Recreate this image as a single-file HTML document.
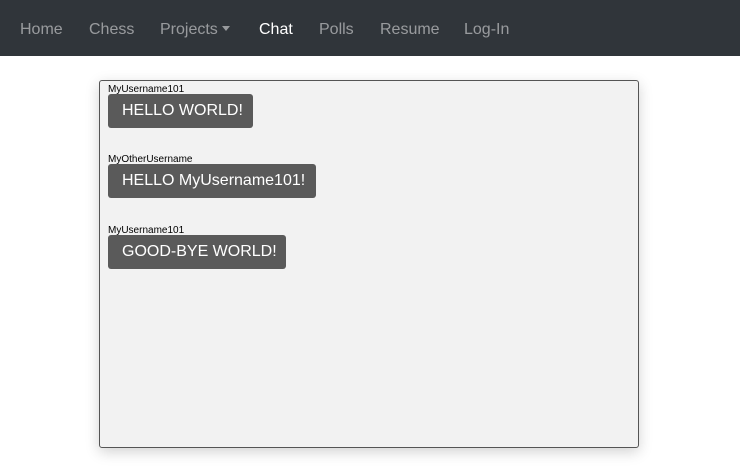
<!DOCTYPE html>
<html><head><style>
body{margin:0;width:740px;height:467px;background:#fff;font-family:"Liberation Sans",sans-serif;overflow:hidden;position:relative}
.nav{height:56px;background:#30353a;position:relative}
.nav span{position:absolute;top:20px;font-size:16px;color:rgba(255,255,255,.5);line-height:20px;white-space:nowrap}
.nav .a{color:#fff}
.box{position:absolute;left:99px;top:80px;width:538px;height:366px;background:#f2f2f2;border:1px solid #555;border-radius:3px;box-shadow:0 4px 14px rgba(0,0,0,.18)}
.u{position:absolute;left:8px;font-size:10px;color:#000;line-height:12px;white-space:nowrap}
.b{position:absolute;left:8px;height:34px;background:#5a5a5a;color:#fff;border-radius:3px;font-size:16px;line-height:34px;padding:0 14px;box-sizing:border-box;white-space:nowrap}
.caret{display:inline-block;border-top:5px solid rgba(255,255,255,.5);border-left:4px solid transparent;border-right:4px solid transparent;vertical-align:3px;margin-left:4px}
</style></head><body>
<div class="nav">
<span style="left:20px">Home</span>
<span style="left:89px">Chess</span>
<span style="left:160px">Projects<i class="caret"></i></span>
<span class="a" style="left:259px">Chat</span>
<span style="left:319px">Polls</span>
<span style="left:380px">Resume</span>
<span style="left:464px">Log-In</span>
</div>
<div class="box">
<div class="u" style="top:3px">MyUsername101</div>
<div class="b" style="top:13px;width:145px">HELLO WORLD!</div>
<div class="u" style="top:73px">MyOtherUsername</div>
<div class="b" style="top:83px;width:208px">HELLO MyUsername101!</div>
<div class="u" style="top:144px">MyUsername101</div>
<div class="b" style="top:154px;width:178px">GOOD-BYE WORLD!</div>
</div>
</body></html>
